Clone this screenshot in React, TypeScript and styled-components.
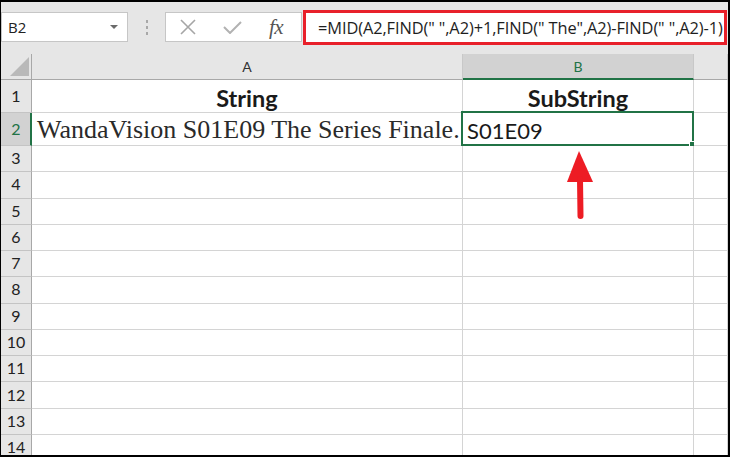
import React from 'react';
import styled, { createGlobalStyle } from 'styled-components';

const GlobalStyle = createGlobalStyle`
  html, body {
    margin: 0;
    padding: 0;
    background: #ffffff;
  }
  * {
    box-sizing: border-box;
  }
`;

const Frame = styled.div`
  width: 730px;
  height: 457px;
  border: 2px solid #000;
  border-left-width: 1px;
  background: #e6e6e6;
  display: flex;
  flex-direction: column;
  overflow: hidden;
  font-family: Lato, "Open Sans", sans-serif;
`;

const Toolbar = styled.div`
  height: 52px;
  flex: none;
  display: flex;
  align-items: flex-start;
  padding-top: 8px;
`;

const NameBox = styled.div`
  width: 127px;
  height: 30px;
  margin-top: 2px;
  background: #fff;
  border: 1px solid #c6c6c6;
  display: flex;
  align-items: center;
  justify-content: space-between;
  padding: 0 9px 0 6px;
  font-family: "Open Sans", sans-serif;
  font-size: 15px;
  color: #222;
`;

const Caret = styled.span`
  width: 0;
  height: 0;
  border-left: 4px solid transparent;
  border-right: 4px solid transparent;
  border-top: 4px solid #6a6a6a;
`;

const Grip = styled.div`
  width: 37px;
  height: 30px;
  margin-top: 2px;
  display: flex;
  flex-direction: column;
  align-items: center;
  justify-content: center;
  gap: 3px;
`;

const GripDot = styled.span`
  width: 2px;
  height: 3px;
  background: #a8a8a8;
`;

const IconBox = styled.div`
  width: 137px;
  height: 30px;
  margin-top: 2px;
  background: #fff;
  border: 1px solid #c6c6c6;
  display: flex;
  align-items: center;
  gap: 26px;
  padding-left: 13px;
`;

const Fx = styled.span`
  font-family: "Liberation Serif", serif;
  font-style: italic;
  font-size: 21px;
  color: #555;
  letter-spacing: -0.5px;
  margin-left: 1px;
`;

const FormulaBox = styled.div`
  width: 424px;
  height: 35px;
  margin-left: 1px;
  background: #fff;
  border: 3px solid #e8202a;
  display: flex;
  align-items: center;
  padding-left: 12px;
  font-family: "Open Sans", sans-serif;
  font-size: 16.4px;
  letter-spacing: -0.1px;
  color: #1e1e1e;
  white-space: nowrap;
  overflow: hidden;
`;

const Sheet = styled.div`
  flex: 1;
  position: relative;
  display: grid;
  grid-template-columns: 31px 431px 231px 1fr;
  grid-template-rows: 26px 33px 33px repeat(12, 26.27px);
  overflow: hidden;
`;

const Corner = styled.div`
  border-right: 1px solid #a8a8a8;
  border-bottom: 1px solid #a8a8a8;
  display: flex;
  align-items: flex-end;
  justify-content: flex-end;
  padding: 0 2px 3px 0;
`;

const ColHeader = styled.div<{ $active?: boolean }>`
  background: ${p => (p.$active ? '#d2d2d2' : '#e6e6e6')};
  border-right: 1px solid #c8c8c8;
  border-bottom: ${p => (p.$active ? '2px solid #217346' : '1px solid #a8a8a8')};
  color: ${p => (p.$active ? '#217346' : '#333')};
  font-size: 14px;
  display: flex;
  align-items: center;
  justify-content: center;
  padding-top: ${p => (p.$active ? '1px' : '0')};
`;

const RowHeader = styled.div<{ $active?: boolean }>`
  background: ${p => (p.$active ? '#d2d2d2' : '#e6e6e6')};
  border-right: ${p => (p.$active ? '2px solid #217346' : '1px solid #a8a8a8')};
  border-bottom: 1px solid #c4c4c4;
  color: ${p => (p.$active ? '#217346' : '#222')};
  font-size: 16px;
  display: flex;
  align-items: center;
  justify-content: center;
  padding: 0 0 2px ${p => (p.$active ? '1px' : '0')};
`;

const Cell = styled.div<{ $align?: 'left' | 'center' }>`
  background: #fff;
  border-right: 1px solid #d4d4d4;
  border-bottom: 1px solid #d4d4d4;
  display: flex;
  align-items: center;
  justify-content: ${p => (p.$align === 'center' ? 'center' : 'flex-start')};
  padding: 0 4px;
  white-space: nowrap;
  color: #1a1a1a;
  position: relative;
`;

const Title = styled.span`
  font-weight: 700;
  font-size: 23.5px;
  padding-top: 3px;
`;

const SerifText = styled.span`
  font-family: "Liberation Serif", serif;
  font-size: 26px;
  color: #2a2a2a;
  padding-top: 2px;
  margin-left: 1px;
  position: relative;
  z-index: 1;
`;

const Value = styled.span`
  font-size: 22px;
  padding-top: 3px;
`;

const Selection = styled.div`
  position: absolute;
  left: -2px;
  top: -2px;
  right: -1px;
  bottom: -1px;
  border: 2px solid #217346;
  pointer-events: none;
`;

const Handle = styled.div`
  position: absolute;
  right: -4px;
  bottom: -4px;
  width: 7px;
  height: 7px;
  background: #217346;
  border: 1px solid #fff;
`;

const ArrowMark = styled.svg`
  position: absolute;
  left: 560px;
  top: 95px;
  width: 40px;
  height: 72px;
`;

const rowsBelow = Array.from({ length: 12 }, (_, i) => i + 3);

export default function App() {
  return (
    <>
      <GlobalStyle />
      <Frame>
        <Toolbar>
          <NameBox>
            <span>B2</span>
            <Caret />
          </NameBox>
          <Grip>
            <GripDot />
            <GripDot />
            <GripDot />
          </Grip>
          <IconBox>
            <svg width="18" height="16" viewBox="0 0 18 16">
              <path d="M2 1 L16 15 M16 1 L2 15" stroke="#a6a6a6" strokeWidth="1.6" fill="none" />
            </svg>
            <svg width="19" height="13" viewBox="0 0 19 13">
              <path d="M1 6 L7 12 L18 1" stroke="#b2b2b2" strokeWidth="2" fill="none" />
            </svg>
            <Fx>fx</Fx>
          </IconBox>
          <FormulaBox>=MID(A2,FIND(" ",A2)+1,FIND(" The",A2)-FIND(" ",A2)-1)</FormulaBox>
        </Toolbar>
        <Sheet>
          <Corner>
            <svg width="19" height="19" viewBox="0 0 19 19">
              <polygon points="0,19 19,0 19,19" fill="#b9b9b9" />
            </svg>
          </Corner>
          <ColHeader>A</ColHeader>
          <ColHeader $active>B</ColHeader>
          <ColHeader />

          <RowHeader>1</RowHeader>
          <Cell $align="center"><Title>String</Title></Cell>
          <Cell $align="center"><Title>SubString</Title></Cell>
          <Cell />

          <RowHeader $active>2</RowHeader>
          <Cell><SerifText>WandaVision S01E09 The Series Finale.</SerifText></Cell>
          <Cell>
            <Value>S01E09</Value>
            <Selection>
              <Handle />
            </Selection>
          </Cell>
          <Cell />

          {rowsBelow.map(n => (
            <React.Fragment key={n}>
              <RowHeader>{n}</RowHeader>
              <Cell />
              <Cell />
              <Cell />
            </React.Fragment>
          ))}

          <ArrowMark viewBox="0 0 40 72">
            <polygon points="18,2 6,33 32,33" fill="#ed1c24" />
            <path d="M19 30 L19.5 67" stroke="#ed1c24" strokeWidth="6" strokeLinecap="round" />
          </ArrowMark>
        </Sheet>
      </Frame>
    </>
  );
}
